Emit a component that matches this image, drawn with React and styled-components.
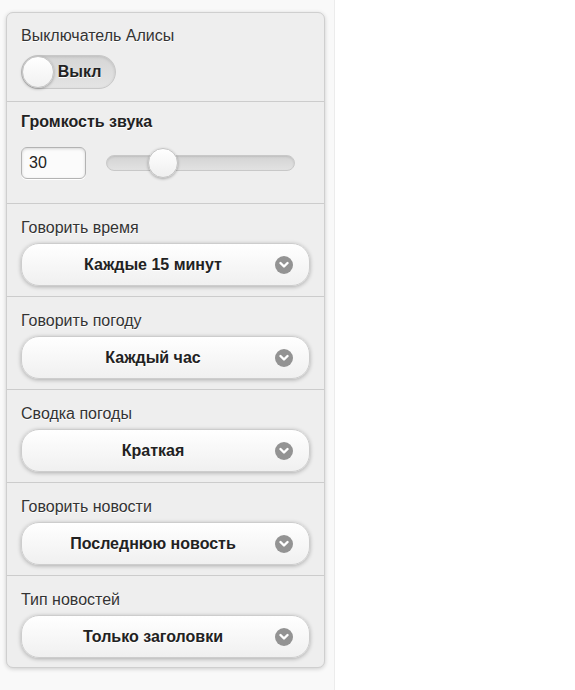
import React from "react";
import styled, { createGlobalStyle } from "styled-components";

const Global = createGlobalStyle`
  html, body { margin: 0; padding: 0; background: #fff; }
  body { font-family: "Liberation Sans", Arial, Helvetica, sans-serif; }
  * { box-sizing: border-box; }
`;

const Column = styled.div`
  width: 335px;
  height: 690px;
  background: #f9f9f9;
  border-right: 1px solid #ececec;
  padding: 12px 0 0 6px;
`;

const Card = styled.div`
  width: 319px;
  background: #eeeeee;
  border: 1px solid #cfcfcf;
  border-radius: 7px;
  box-shadow: 0 1px 4px rgba(0, 0, 0, 0.18);
  overflow: hidden;
`;

const Section = styled.div`
  padding: ${(p) => p.$pad || (p.$last ? "14px 14px 9px" : "14px 14px 10px")};
  border-bottom: ${(p) => (p.$last ? "none" : "1px solid #cccccc")};
`;

const Label = styled.div`
  font-size: 16px;
  line-height: 20px;
  color: ${(p) => (p.$bold ? "#222" : "#333")};
  font-weight: ${(p) => (p.$bold ? 700 : 400)};
  text-shadow: 0 1px 0 #fff;
  margin-bottom: ${(p) => p.$gap || "5px"};
`;

const Toggle = styled.div`
  width: 95px;
  height: 34px;
  border-radius: 17px;
  border: 1px solid #c8c8c8;
  background: linear-gradient(#d6d6d6, #e4e4e4);
  box-shadow: inset 0 1px 3px rgba(0, 0, 0, 0.12);
  display: flex;
  align-items: center;
`;

const Knob = styled.div`
  width: 32px;
  height: 32px;
  border-radius: 50%;
  background: linear-gradient(#ffffff, #f1f1f1);
  border: 1px solid #c4c4c4;
  box-shadow: 0 1px 3px rgba(0, 0, 0, 0.3);
  flex: none;
`;

const ToggleText = styled.span`
  flex: 1;
  text-align: center;
  font-weight: 700;
  font-size: 16px;
  color: #222;
  text-shadow: 0 1px 0 #fff;
  padding-right: 10px;
`;

const SliderRow = styled.div`
  display: flex;
  align-items: center;
  gap: 20px;
`;

const NumberBox = styled.div`
  width: 65px;
  height: 32px;
  flex: none;
  border: 1px solid #b3b3b3;
  border-radius: 6px;
  background: #fbfbfb;
  box-shadow: inset 0 1px 3px rgba(0, 0, 0, 0.15), 0 1px 0 #fff;
  font-size: 16px;
  color: #222;
  display: flex;
  align-items: center;
  padding-left: 7px;
`;

const Track = styled.div`
  position: relative;
  width: 189px;
  height: 16px;
  border-radius: 8px;
  border: 1px solid #c8c8c8;
  background: linear-gradient(#d3d3d3, #e2e2e2);
  box-shadow: inset 0 1px 2px rgba(0, 0, 0, 0.1);
`;

const Thumb = styled.div`
  position: absolute;
  top: 50%;
  width: 30px;
  height: 30px;
  margin: -15px 0 0 -15px;
  border-radius: 50%;
  border: 1px solid #c4c4c4;
  background: linear-gradient(#ffffff, #efefef);
  box-shadow: 0 1px 3px rgba(0, 0, 0, 0.3);
`;

const Select = styled.div`
  position: relative;
  height: 43px;
  border-radius: 18px;
  border: 1px solid #cdcdcd;
  background: linear-gradient(#ffffff, #f0f0f0);
  box-shadow: 0 1px 4px rgba(0, 0, 0, 0.28);
  display: flex;
  align-items: center;
  justify-content: center;
  padding: 0 40px 0 15px;
  font-size: 16px;
  font-weight: 700;
  color: #222;
  text-shadow: 0 1px 0 #fff;
`;

const Chevron = styled.span`
  position: absolute;
  right: 16px;
  top: 50%;
  width: 18px;
  height: 18px;
  margin-top: -9px;
  border-radius: 50%;
  background: #939393;
  display: flex;
  align-items: center;
  justify-content: center;
`;

const ChevronIcon = () => (
  <Chevron>
    <svg width="10" height="8" viewBox="0 0 10 8">
      <path d="M1.5 2 L5 5.5 L8.5 2" fill="none" stroke="#fff" strokeWidth="2.4" strokeLinecap="round" strokeLinejoin="round" />
    </svg>
  </Chevron>
);

const selects = [
  { label: "Говорить время", value: "Каждые 15 минут" },
  { label: "Говорить погоду", value: "Каждый час" },
  { label: "Сводка погоды", value: "Краткая" },
  { label: "Говорить новости", value: "Последнюю новость" },
  { label: "Тип новостей", value: "Только заголовки" },
];

export default function App() {
  const volume = 30;
  return (
    <>
      <Global />
      <Column>
        <Card>
          <Section $pad="13px 14px 12px">
            <Label $gap="9px">Выключатель Алисы</Label>
            <Toggle>
              <Knob />
              <ToggleText>Выкл</ToggleText>
            </Toggle>
          </Section>
          <Section $pad="10px 14px 24px">
            <Label $bold $gap="15px">Громкость звука</Label>
            <SliderRow>
              <NumberBox>{volume}</NumberBox>
              <Track>
                <Thumb style={{ left: `${volume}%` }} />
              </Track>
            </SliderRow>
          </Section>
          {selects.map((s, i) => (
            <Section key={s.label} $last={i === selects.length - 1}>
              <Label>{s.label}</Label>
              <Select>
                {s.value}
                <ChevronIcon />
              </Select>
            </Section>
          ))}
        </Card>
      </Column>
    </>
  );
}
